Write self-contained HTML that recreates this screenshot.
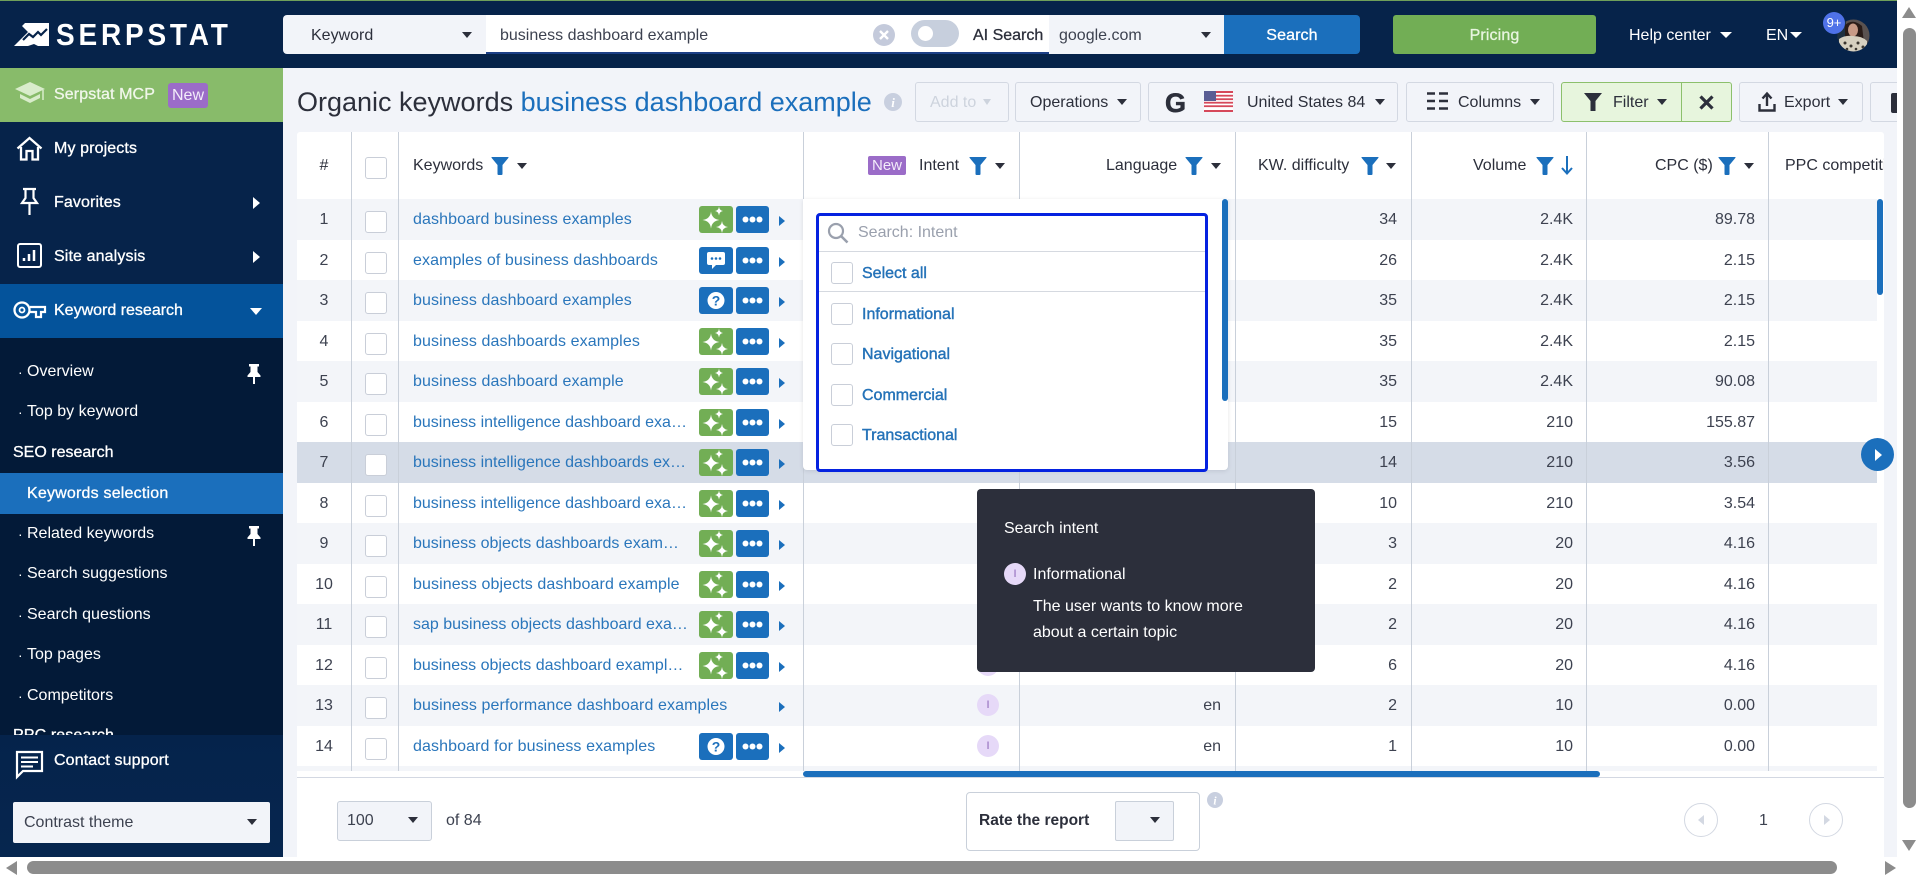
<!DOCTYPE html>
<html lang="en"><head><meta charset="utf-8"><title>Serpstat</title>
<style>
*{box-sizing:border-box}
html,body{margin:0;padding:0;width:1920px;height:878px;overflow:hidden;background:#fff}
body{font-family:"Liberation Sans",Arial,sans-serif;font-size:16px;color:#2c2f3b;position:relative}
.a{position:absolute}
.t{position:absolute;white-space:nowrap;line-height:20px;margin-top:1px}
.m{-webkit-text-stroke:.3px;letter-spacing:.12px}
.w{color:#fff}
svg{display:block;overflow:visible}
.s{position:absolute}
.btn{position:absolute;top:82px;height:40px;background:#f2f4f9;border:1px solid #d3d8e2;border-radius:3px}
.car{position:absolute;width:0;height:0;border-left:5.5px solid transparent;border-right:5.5px solid transparent;border-top:6px solid #2c2f3b}
.carw{border-top-color:#fff}
.cb{position:absolute;width:22px;height:22px;background:#fff;border:1px solid #c9ced8;border-radius:3px}
.side{color:#fff}
.r{position:absolute;left:297px;width:1580px;height:40.5px;line-height:42.5px}
.o{background:#f3f5f9}
.h{background:#d5dce7}
.r>span{position:absolute;top:0;white-space:nowrap}
.n{left:0;width:54px;text-align:center;color:#3d4250}
.k{left:116px;color:#2a76bb;letter-spacing:.1px}
.r .cb{left:68px;top:12px}
.rb{position:absolute;top:7px;height:27px;border-radius:3px;background:#1b6fbc}
.rg{left:402px;width:34px;background:#72ae55}
.rc{left:402px;width:34px}
.rd{left:439px;width:33px}
.rt{position:absolute;left:482px;top:17px;width:0;height:0;border-top:5px solid transparent;border-bottom:5px solid transparent;border-left:6px solid #1b6fbc}
.kw{right:480px;color:#3d4250}.vl{right:304px;color:#3d4250}.cp{right:122px;color:#3d4250}.lg{right:656px;color:#3d4250}
.line{position:absolute;top:132px;height:639px;width:1px;background:#c9d0da}
.th{position:absolute;top:156px;line-height:20px;white-space:nowrap;color:#2c2f3b}
.dd{position:absolute;left:862px;line-height:20px;color:#2472b8;white-space:nowrap;-webkit-text-stroke:.4px;margin-top:1px}
.ic{position:absolute;width:22px;height:22px;border-radius:50%;background:#e6d9f8;color:#8b63b8;font-size:11px;line-height:22px;text-align:center}
</style></head><body>
<svg width="0" height="0" style="position:absolute">
<defs>
<symbol id="fn" viewBox="0 0 18 18"><path d="M1 0H17Q18 0 17.3 1L11.5 8V17Q11.5 18 10.5 18H7.5Q6.5 18 6.5 17V8L.7 1Q0 0 1 0Z" fill="#1b6fbc"/></symbol>
<symbol id="sp" viewBox="0 0 34 27"><g fill="#fff"><path d="M12 5.500Q12.800 13 20.500 14Q12.800 15 12 22.500Q11.200 15 3.500 14Q11.200 13 12 5.500Z"/><path d="M20 .5Q20.400 4.500 24 5Q20.400 5.500 20 9.500Q19.600 5.500 16 5Q19.600 4.500 20 .5Z"/><path d="M23 15Q23.600 20.400 29 21Q23.600 21.600 23 27Q22.400 21.600 17 21Q22.400 20.400 23 15Z"/></g></symbol>
<symbol id="dt" viewBox="0 0 33 27"><g fill="#fff"><circle cx="9.500" cy="13.500" r="3"/><circle cx="16.500" cy="13.500" r="3"/><circle cx="23.500" cy="13.500" r="3"/></g></symbol>
<symbol id="ch" viewBox="0 0 34 27"><path d="M10 5H24Q26 5 26 7V16Q26 18 24 18H17L13 22V18H10Q8 18 8 16V7Q8 5 10 5Z" fill="#fff"/><g fill="#1b6fbc"><circle cx="13" cy="11.500" r="1.300"/><circle cx="17" cy="11.500" r="1.300"/><circle cx="21" cy="11.500" r="1.300"/></g></symbol>
<symbol id="pi" viewBox="0 0 14 20"><path d="M2 0H12V2.500H10.500V8L13.500 11.500V13H8V20H6V13H.5V11.500L3.500 8V2.500H2Z" fill="#fff"/></symbol>
</defs></svg>

<!-- page bg -->
<div class="a" style="left:283px;top:68px;width:1614px;height:789px;background:#f2f4f9"></div>

<!-- header -->
<div class="a" style="left:0;top:0;width:1897px;height:68px;background:#06234a"></div>
<div class="a" style="left:0;top:0;width:1897px;height:1px;background:#6f9f5a"></div>
<svg class="s" style="left:14px;top:23px" width="36" height="24" viewBox="0 0 36 24"><path d="M11 0H35V23H24L20 21L14 23H0L11 12L14 9L8 3Z" fill="#fff"/><path d="M9 17L15 11L19 14L24 9L27 12L33 6" fill="none" stroke="#06234a" stroke-width="2.200"/><path d="M28 0H35V8Z" fill="#fff"/></svg>
<div class="t w" style="left:56px;top:17px;font-size:28px;line-height:34px;font-weight:bold;letter-spacing:3.800px;transform:scaleY(1.1);transform-origin:0 50%">SERPSTAT</div>

<div class="a" style="left:283px;top:15px;width:204px;height:39px;background:#f2f4f9;border-radius:4px 0 0 4px"></div>
<div class="t" style="left:311px;top:25px">Keyword</div>
<div class="car" style="left:462px;top:32px"></div>
<div class="a" style="left:486px;top:15px;width:563px;height:39px;background:#fff;border-bottom:2px solid #1c3f86"></div>
<div class="t" style="left:500px;top:25px;color:#3d4250">business dashboard example</div>
<svg class="s" style="left:873px;top:24px" width="22" height="22" viewBox="0 0 22 22"><circle cx="11" cy="11" r="11" fill="#c4cadb"/><path d="M7 7L15 15M15 7L7 15" stroke="#fff" stroke-width="2.400"/></svg>
<div class="a" style="left:911px;top:20px;width:48px;height:27px;border-radius:14px;background:#c7cfdd"></div>
<div class="a" style="left:918px;top:26px;width:15px;height:15px;border-radius:50%;background:#fff"></div>
<div class="t m" style="left:973px;top:25px;letter-spacing:0">AI Search</div>
<div class="a" style="left:1049px;top:15px;width:176px;height:39px;background:#f2f4f9"></div>
<div class="t" style="left:1059px;top:25px;color:#3d4250">google.com</div>
<div class="car" style="left:1201px;top:32px"></div>
<div class="a" style="left:1224px;top:15px;width:136px;height:39px;background:#1b6fbc;border-radius:0 4px 4px 0"></div>
<div class="t w m" style="left:1224px;width:136px;text-align:center;top:25px">Search</div>
<div class="a" style="left:1393px;top:15px;width:203px;height:39px;background:#72ae55;border-radius:3px"></div>
<div class="t m" style="left:1393px;width:203px;text-align:center;top:25px;color:#e8f5e0">Pricing</div>
<div class="t w" style="left:1629px;top:25px">Help center</div>
<div class="car carw" style="left:1720px;top:32px;border-left-width:6px;border-right-width:6px"></div>
<div class="t w" style="left:1766px;top:25px">EN</div>
<div class="car carw" style="left:1790px;top:32px;border-left-width:6px;border-right-width:6px"></div>
<svg class="s" style="left:1837px;top:19px" width="33" height="33" viewBox="0 0 33 33"><clipPath id="av"><circle cx="16.500" cy="16.500" r="16"/></clipPath><g clip-path="url(#av)"><rect width="33" height="33" fill="#5a5250"/><rect x="0" width="9" height="33" fill="#1e3040"/><path d="M8 6Q16 -1 25 7L27 24H8Z" fill="#2a1c18"/><ellipse cx="16" cy="11" rx="5" ry="6.500" fill="#c79a86"/><path d="M2 33V20Q8 16 16 17Q25 17 30 22V33Z" fill="#d6d0c0"/><g fill="#3a3630"><circle cx="8" cy="24" r="1.500"/><circle cx="14" cy="27" r="1.500"/><circle cx="21" cy="24" r="1.500"/><circle cx="26" cy="28" r="1.500"/><circle cx="10" cy="30" r="1.300"/><circle cx="19" cy="30" r="1.300"/></g></g></svg>
<div class="a" style="left:1823px;top:12px;width:22px;height:22px;border-radius:50%;background:#4f72e8;color:#fff;font-size:13px;line-height:22px;text-align:center">9+</div>

<!-- sidebar -->
<div class="a" style="left:0;top:68px;width:283px;height:789px;background:#06234a"></div>
<div class="a" style="left:0;top:68px;width:283px;height:54px;background:#88bb6a"></div>
<svg class="s" style="left:14px;top:81px" width="32" height="25" viewBox="0 0 32 25"><path d="M16 1L31 8L16 15L1 8Z" fill="#d9eccb"/><path d="M6 13V17L16 22L26 17V13L16 18Z" fill="#d9eccb"/><path d="M29 9V19" stroke="#d9eccb" stroke-width="1.500"/></svg>
<div class="t m" style="left:54px;top:84px;color:#f0f6ea">Serpstat MCP</div>
<div class="a" style="left:168px;top:83px;width:40px;height:25px;background:#9b6cc8;border-radius:3px;color:#f3ecfa;text-align:center;line-height:25px">New</div>

<svg class="s" style="left:16px;top:136px" width="27" height="25" viewBox="0 0 27 25"><path d="M1.500 12.500L13.500 2L25.500 12.500M5 11V23.500H10.500V15H16.500V23.500H22V11" fill="none" stroke="#fff" stroke-width="2.300"/></svg>
<div class="t w m" style="left:54px;top:138px">My projects</div>
<svg class="s" style="left:20px;top:188px" width="19" height="27" viewBox="0 0 19 27"><path d="M3 1H16M5.500 1V10L2 15H17L13.500 10V1M9.500 15V27" fill="none" stroke="#fff" stroke-width="2.200"/></svg>
<div class="t w m" style="left:54px;top:192px">Favorites</div>
<div class="a" style="left:253px;top:197px;border-top:6px solid transparent;border-bottom:6px solid transparent;border-left:7px solid #fff"></div>
<svg class="s" style="left:17px;top:243px" width="25" height="25" viewBox="0 0 25 25"><rect x="1" y="1" width="23" height="23" rx="2" fill="none" stroke="#fff" stroke-width="2"/><path d="M7 15V18M12 11V18M17 7V18" stroke="#fff" stroke-width="2.500"/></svg>
<div class="t w m" style="left:54px;top:246px">Site analysis</div>
<div class="a" style="left:253px;top:251px;border-top:6px solid transparent;border-bottom:6px solid transparent;border-left:7px solid #fff"></div>
<div class="a" style="left:0;top:284px;width:283px;height:54px;background:#04539b"></div>
<svg class="s" style="left:13px;top:300px" width="33" height="20" viewBox="0 0 33 20"><circle cx="9" cy="10" r="7.500" fill="none" stroke="#fff" stroke-width="2.300"/><circle cx="9" cy="10" r="2.500" fill="none" stroke="#fff" stroke-width="1.800"/><path d="M17 7H32V12H28V17H23V12H17" fill="none" stroke="#fff" stroke-width="2.200"/></svg>
<div class="t w m" style="left:54px;top:300px;letter-spacing:0">Keyword research</div>
<div class="a" style="left:250px;top:308px;border-left:6.500px solid transparent;border-right:6.500px solid transparent;border-top:7px solid #fff"></div>

<div class="a" style="left:0;top:338px;width:283px;height:397px;background:#031a38"></div>
<div class="t w" style="left:18px;top:361px;font-size:14px">·</div><div class="t w" style="left:27px;top:361px">Overview</div>
<svg class="s" style="left:247px;top:364px" width="14" height="20"><use href="#pi"/></svg>
<div class="t w" style="left:18px;top:401px;font-size:14px">·</div><div class="t w" style="left:27px;top:401px">Top by keyword</div>
<div class="t w m" style="left:13px;top:442px;letter-spacing:0">SEO research</div>
<div class="a" style="left:0;top:473px;width:283px;height:41px;background:#1b6fbc"></div>
<div class="t w m" style="left:27px;top:483px;letter-spacing:.2px">Keywords selection</div>
<div class="t w" style="left:18px;top:523px;font-size:14px">·</div><div class="t w" style="left:27px;top:523px">Related keywords</div>
<svg class="s" style="left:247px;top:526px" width="14" height="20"><use href="#pi"/></svg>
<div class="t w" style="left:18px;top:563px;font-size:14px">·</div><div class="t w" style="left:27px;top:563px">Search suggestions</div>
<div class="t w" style="left:18px;top:604px;font-size:14px">·</div><div class="t w" style="left:27px;top:604px">Search questions</div>
<div class="t w" style="left:18px;top:644px;font-size:14px">·</div><div class="t w" style="left:27px;top:644px">Top pages</div>
<div class="t w" style="left:18px;top:685px;font-size:14px">·</div><div class="t w" style="left:27px;top:685px">Competitors</div>
<div class="t w m" style="left:13px;top:725px">PPC research</div>

<div class="a" style="left:0;top:735px;width:283px;height:122px;background:linear-gradient(#05234b,#06264f)"></div>
<svg class="s" style="left:15px;top:750px" width="29" height="28" viewBox="0 0 29 28"><path d="M2 2H27V21H8L2 27Z" fill="none" stroke="#fff" stroke-width="2.200"/><path d="M6 7.500H23M6 12H23M6 16.500H18" stroke="#fff" stroke-width="2"/></svg>
<div class="t w m" style="left:54px;top:750px">Contact support</div>
<div class="a" style="left:13px;top:802px;width:257px;height:41px;background:#f2f4f9;border-radius:2px"></div>
<div class="t" style="left:24px;top:812px;color:#3d4250">Contrast theme</div>
<div class="car" style="left:247px;top:819px"></div>

<!-- title -->
<div class="t" style="left:297px;top:85px;font-size:27px;line-height:32px">Organic keywords <span style="color:#1b6fbc">business dashboard example</span></div>
<svg class="s" style="left:884px;top:93px" width="18" height="18" viewBox="0 0 18 18"><circle cx="9" cy="9" r="9" fill="#c8cfdf"/><text x="9" y="14" text-anchor="middle" font-size="13" font-weight="bold" font-style="italic" fill="#fff" font-family="Liberation Serif,serif">i</text></svg>

<div class="btn" style="left:915px;width:94px"></div>
<div class="t" style="left:930px;top:92px;color:#cdd3dd">Add to</div>
<div class="car" style="left:983px;top:99px;border-top-color:#cdd3dd;border-left-width:4.500px;border-right-width:4.500px"></div>
<div class="btn" style="left:1015px;width:126px"></div>
<div class="t" style="left:1030px;top:92px">Operations</div>
<div class="car" style="left:1117px;top:99px"></div>
<div class="btn" style="left:1148px;width:250px"></div>
<div class="t" style="left:1165px;top:86px;font-size:27px;line-height:32px;font-weight:bold;color:#2c2f3b;-webkit-text-stroke:.6px #2c2f3b">G</div>
<svg class="s" style="left:1204px;top:91px" width="29" height="21" viewBox="0 0 29 21"><rect width="29" height="21" fill="#fff"/><g fill="#d6485a"><rect width="29" height="2"/><rect y="3.800" width="29" height="1.800"/><rect y="7.300" width="29" height="1.800"/><rect y="10.800" width="29" height="1.800"/><rect y="14.300" width="29" height="1.800"/><rect y="19" width="29" height="2"/></g><rect width="12" height="10" fill="#5a5d94"/></svg>
<div class="t" style="left:1247px;top:92px">United States 84</div>
<div class="car" style="left:1375px;top:99px"></div>
<div class="btn" style="left:1406px;width:148px"></div>
<svg class="s" style="left:1427px;top:92px" width="21" height="18"><path d="M0 1.500H8M12 1.500H21M0 9H8M12 9H21M0 16.500H8M12 16.500H21" stroke="#2c2f3b" stroke-width="2.600"/></svg>
<div class="t" style="left:1458px;top:92px">Columns</div>
<div class="car" style="left:1530px;top:99px"></div>
<div class="btn" style="left:1561px;width:171px;background:#e7f5dd;border-color:#8cc06c"></div>
<div class="a" style="left:1681px;top:82px;width:1px;height:40px;background:#8cc06c"></div>
<svg class="s" style="left:1584px;top:93px" width="18" height="18"><path d="M0 0H18L11.500 8V18H6.500V8Z" fill="#2c2f3b"/></svg>
<div class="t" style="left:1613px;top:92px">Filter</div>
<div class="car" style="left:1657px;top:99px"></div>
<svg class="s" style="left:1699px;top:95px" width="15" height="15"><path d="M1.500 1.500L13.500 13.500M13.500 1.500L1.500 13.500" stroke="#2c2f3b" stroke-width="3.200"/></svg>
<div class="btn" style="left:1739px;width:124px"></div>
<svg class="s" style="left:1758px;top:92px" width="18" height="20" viewBox="0 0 18 20"><path d="M9 14V2M4.500 6.500L9 1.500L13.500 6.500M1.500 12V18.500H16.500V12" fill="none" stroke="#2c2f3b" stroke-width="2.400"/></svg>
<div class="t" style="left:1784px;top:92px">Export</div>
<div class="car" style="left:1838px;top:99px"></div>
<div class="a" style="left:1870px;top:82px;width:40px;height:40px;background:#f2f4f9;border:1px solid #d3d8e2;border-radius:3px"></div>
<div class="a" style="left:1891px;top:93px;width:8px;height:20px;background:#2c2f3b;border-radius:2px 0 0 2px"></div>

<!-- table -->
<div class="a" style="left:297px;top:132px;width:1587px;height:725px;background:#fff;border-radius:3px 3px 0 0"></div>

<div class="r o" style="top:199px"><span class="n">1</span><i class="cb"></i><span class="k">dashboard business examples</span><div class="rb rg"><svg width="34" height="27"><use href="#sp"/></svg></div><div class="rb rd"><svg width="33" height="27"><use href="#dt"/></svg></div><i class="rt"></i><span class="kw">34</span><span class="vl">2.4K</span><span class="cp">89.78</span></div>
<div class="r" style="top:239.5px"><span class="n">2</span><i class="cb"></i><span class="k">examples of business dashboards</span><div class="rb rc"><svg width="34" height="27"><use href="#ch"/></svg></div><div class="rb rd"><svg width="33" height="27"><use href="#dt"/></svg></div><i class="rt"></i><span class="kw">26</span><span class="vl">2.4K</span><span class="cp">2.15</span></div>
<div class="r o" style="top:280px"><span class="n">3</span><i class="cb"></i><span class="k">business dashboard examples</span><div class="rb rc"><svg width="34" height="27" viewBox="0 0 34 27"><circle cx="17" cy="13.500" r="8.500" fill="#fff"/><text x="17" y="18.500" text-anchor="middle" font-size="14" font-weight="bold" fill="#1b6fbc" font-family="Liberation Sans,sans-serif">?</text></svg></div><div class="rb rd"><svg width="33" height="27"><use href="#dt"/></svg></div><i class="rt"></i><span class="kw">35</span><span class="vl">2.4K</span><span class="cp">2.15</span></div>
<div class="r" style="top:320.5px"><span class="n">4</span><i class="cb"></i><span class="k">business dashboards examples</span><div class="rb rg"><svg width="34" height="27"><use href="#sp"/></svg></div><div class="rb rd"><svg width="33" height="27"><use href="#dt"/></svg></div><i class="rt"></i><span class="kw">35</span><span class="vl">2.4K</span><span class="cp">2.15</span></div>
<div class="r o" style="top:361px"><span class="n">5</span><i class="cb"></i><span class="k">business dashboard example</span><div class="rb rg"><svg width="34" height="27"><use href="#sp"/></svg></div><div class="rb rd"><svg width="33" height="27"><use href="#dt"/></svg></div><i class="rt"></i><span class="kw">35</span><span class="vl">2.4K</span><span class="cp">90.08</span></div>
<div class="r" style="top:401.5px"><span class="n">6</span><i class="cb"></i><span class="k" style="letter-spacing:0">business intelligence dashboard exa…</span><div class="rb rg"><svg width="34" height="27"><use href="#sp"/></svg></div><div class="rb rd"><svg width="33" height="27"><use href="#dt"/></svg></div><i class="rt"></i><span class="kw">15</span><span class="vl">210</span><span class="cp">155.87</span></div>
<div class="r h" style="top:442px"><span class="n">7</span><i class="cb"></i><span class="k" style="letter-spacing:0">business intelligence dashboards ex…</span><div class="rb rg"><svg width="34" height="27"><use href="#sp"/></svg></div><div class="rb rd"><svg width="33" height="27"><use href="#dt"/></svg></div><i class="rt"></i><span class="kw">14</span><span class="vl">210</span><span class="cp">3.56</span></div>
<div class="r" style="top:482.5px"><span class="n">8</span><i class="cb"></i><span class="k" style="letter-spacing:0">business intelligence dashboard exa…</span><div class="rb rg"><svg width="34" height="27"><use href="#sp"/></svg></div><div class="rb rd"><svg width="33" height="27"><use href="#dt"/></svg></div><i class="rt"></i><span class="kw">10</span><span class="vl">210</span><span class="cp">3.54</span></div>
<div class="r o" style="top:523px"><span class="n">9</span><i class="cb"></i><span class="k" style="letter-spacing:0">business objects dashboards exam…</span><div class="rb rg"><svg width="34" height="27"><use href="#sp"/></svg></div><div class="rb rd"><svg width="33" height="27"><use href="#dt"/></svg></div><i class="rt"></i><span class="kw">3</span><span class="vl">20</span><span class="cp">4.16</span></div>
<div class="r" style="top:563.5px"><span class="n">10</span><i class="cb"></i><span class="k">business objects dashboard example</span><div class="rb rg"><svg width="34" height="27"><use href="#sp"/></svg></div><div class="rb rd"><svg width="33" height="27"><use href="#dt"/></svg></div><i class="rt"></i><span class="kw">2</span><span class="vl">20</span><span class="cp">4.16</span></div>
<div class="r o" style="top:604px"><span class="n">11</span><i class="cb"></i><span class="k" style="letter-spacing:0">sap business objects dashboard exa…</span><div class="rb rg"><svg width="34" height="27"><use href="#sp"/></svg></div><div class="rb rd"><svg width="33" height="27"><use href="#dt"/></svg></div><i class="rt"></i><span class="kw">2</span><span class="vl">20</span><span class="cp">4.16</span></div>
<div class="r" style="top:644.5px"><span class="n">12</span><i class="cb"></i><span class="k" style="letter-spacing:0">business objects dashboard exampl…</span><div class="rb rg"><svg width="34" height="27"><use href="#sp"/></svg></div><div class="rb rd"><svg width="33" height="27"><use href="#dt"/></svg></div><i class="rt"></i><div class="ic" style="left:680px;top:9px">I</div><span class="kw">6</span><span class="vl">20</span><span class="cp">4.16</span></div>
<div class="r o" style="top:685px"><span class="n">13</span><i class="cb"></i><span class="k">business performance dashboard examples</span><i class="rt"></i><div class="ic" style="left:680px;top:9px">I</div><span class="lg">en</span><span class="kw">2</span><span class="vl">10</span><span class="cp">0.00</span></div>
<div class="r" style="top:725.5px"><span class="n">14</span><i class="cb"></i><span class="k">dashboard for business examples</span><div class="rb rc"><svg width="34" height="27" viewBox="0 0 34 27"><circle cx="17" cy="13.500" r="8.500" fill="#fff"/><text x="17" y="18.500" text-anchor="middle" font-size="14" font-weight="bold" fill="#1b6fbc" font-family="Liberation Sans,sans-serif">?</text></svg></div><div class="rb rd"><svg width="33" height="27"><use href="#dt"/></svg></div><i class="rt"></i><div class="ic" style="left:680px;top:9px">I</div><span class="lg">en</span><span class="kw">1</span><span class="vl">10</span><span class="cp">0.00</span></div>
<div class="a o" style="left:297px;top:766px;width:1580px;height:5px"></div>

<div class="line" style="left:351px"></div><div class="line" style="left:398px"></div><div class="line" style="left:803px"></div><div class="line" style="left:1019px"></div><div class="line" style="left:1235px"></div><div class="line" style="left:1411px"></div><div class="line" style="left:1586px"></div><div class="line" style="left:1768px"></div>

<!-- table head -->
<div class="th" style="left:297px;width:54px;text-align:center">#</div>
<div class="cb" style="left:365px;top:157px"></div>
<div class="th" style="left:413px">Keywords</div>
<svg class="s" style="left:491px;top:157px" width="18" height="18"><use href="#fn"/></svg><div class="car" style="left:517px;top:163px"></div>
<div class="a" style="left:868px;top:156px;width:38px;height:19px;background:#9b6cc8;border-radius:2px;color:#f3ecfa;font-size:15px;line-height:19px;text-align:center">New</div>
<div class="th" style="left:919px">Intent</div>
<svg class="s" style="left:969px;top:157px" width="18" height="18"><use href="#fn"/></svg><div class="car" style="left:995px;top:163px"></div>
<div class="th" style="left:1106px">Language</div>
<svg class="s" style="left:1185px;top:157px" width="18" height="18"><use href="#fn"/></svg><div class="car" style="left:1211px;top:163px"></div>
<div class="th" style="left:1258px">KW. difficulty</div>
<svg class="s" style="left:1361px;top:157px" width="18" height="18"><use href="#fn"/></svg><div class="car" style="left:1386px;top:163px"></div>
<div class="th" style="left:1473px">Volume</div>
<svg class="s" style="left:1536px;top:157px" width="18" height="18"><use href="#fn"/></svg>
<svg class="s" style="left:1561px;top:156px" width="12" height="19" viewBox="0 0 12 19"><path d="M6 0V17M1 12L6 17.500L11 12" fill="none" stroke="#1b6fbc" stroke-width="2"/></svg>
<div class="th" style="left:1655px">CPC ($)</div>
<svg class="s" style="left:1718px;top:157px" width="18" height="18"><use href="#fn"/></svg><div class="car" style="left:1744px;top:163px"></div>
<div class="a" style="left:1785px;top:156px;width:99px;height:20px;overflow:hidden;white-space:nowrap;line-height:20px">PPC competition</div>

<!-- table scrollbars -->
<div class="a" style="left:1877px;top:199px;width:6px;height:96px;background:#1b6fbc;border-radius:3px"></div>
<div class="a" style="left:803px;top:771px;width:797px;height:6px;background:#1b6fbc;border-radius:3px"></div>
<div class="a" style="left:297px;top:777px;width:1587px;height:1px;background:#d3d8e2"></div>
<div class="a" style="left:1861px;top:438px;width:33px;height:33px;border-radius:50%;background:#1b6fbc"></div>
<div class="a" style="left:1875px;top:449px;border-top:6px solid transparent;border-bottom:6px solid transparent;border-left:7px solid #fff"></div>

<!-- dropdown -->
<div class="a" style="left:803px;top:199px;width:425px;height:271px;background:#fff;border-radius:0 0 4px 4px;box-shadow:0 1px 4px rgba(60,70,90,.15)"></div>
<div class="a" style="left:816px;top:213px;width:392px;height:259px;border:3px solid #0522e0;border-radius:4px"></div>
<div class="a" style="left:819px;top:251px;width:386px;height:1px;background:#d5d9e0"></div>
<div class="a" style="left:819px;top:291px;width:386px;height:1px;background:#d5d9e0"></div>
<svg class="s" style="left:827px;top:222px" width="22" height="22" viewBox="0 0 22 22"><circle cx="9" cy="9" r="7" fill="none" stroke="#9aa0ad" stroke-width="2.200"/><path d="M14 14L20.500 20.500" stroke="#9aa0ad" stroke-width="2.600"/></svg>
<div class="t" style="left:858px;top:222px;color:#9aa0ad">Search: Intent</div>
<div class="cb" style="left:831px;top:262px"></div><div class="dd" style="top:263px">Select all</div>
<div class="cb" style="left:831px;top:303px"></div><div class="dd" style="top:304px">Informational</div>
<div class="cb" style="left:831px;top:343px"></div><div class="dd" style="top:344px">Navigational</div>
<div class="cb" style="left:831px;top:384px"></div><div class="dd" style="top:385px">Commercial</div>
<div class="cb" style="left:831px;top:424px"></div><div class="dd" style="top:425px">Transactional</div>
<div class="a" style="left:1222px;top:199px;width:6px;height:202px;background:#1b6fbc;border-radius:3px"></div>

<!-- tooltip -->
<div class="a" style="left:977px;top:489px;width:338px;height:183px;background:#2c2f3b;border-radius:4px"></div>
<div class="t" style="left:1004px;top:518px;color:#fff">Search intent</div>
<div class="ic" style="left:1004px;top:563px">I</div>
<div class="t" style="left:1033px;top:564px;color:#fff">Informational</div>
<div class="t" style="left:1033px;top:596px;color:#fff">The user wants to know more</div>
<div class="t" style="left:1033px;top:622px;color:#fff">about a certain topic</div>

<!-- footer -->
<div class="a" style="left:337px;top:801px;width:95px;height:40px;background:#f2f4f9;border:1px solid #c9d0da;border-radius:3px"></div>
<div class="t" style="left:347px;top:810px;color:#3d4250">100</div>
<div class="car" style="left:408px;top:817px"></div>
<div class="t" style="left:446px;top:810px;color:#3d4250">of 84</div>
<div class="a" style="left:966px;top:792px;width:234px;height:59px;border:1px solid #c9d0da;border-radius:4px;background:#fff"></div>
<div class="t" style="left:979px;top:810px;font-weight:bold;font-size:15.500px;line-height:20px">Rate the report</div>
<div class="a" style="left:1115px;top:801px;width:59px;height:40px;background:#f2f4f9;border:1px solid #c9d0da;border-radius:2px"></div>
<div class="car" style="left:1150px;top:817px"></div>
<svg class="s" style="left:1207px;top:792px" width="16" height="16" viewBox="0 0 18 18"><circle cx="9" cy="9" r="9" fill="#c8cfdf"/><text x="9" y="14" text-anchor="middle" font-size="13" font-weight="bold" font-style="italic" fill="#fff" font-family="Liberation Serif,serif">i</text></svg>
<div class="a" style="left:1684px;top:803px;width:34px;height:34px;border-radius:50%;border:1px solid #d3d8e2;background:#fff"></div>
<div class="a" style="left:1698px;top:815px;border-top:5px solid transparent;border-bottom:5px solid transparent;border-right:6px solid #d3d8e2"></div>
<div class="t" style="left:1759px;top:810px;color:#3d4250">1</div>
<div class="a" style="left:1809px;top:803px;width:34px;height:34px;border-radius:50%;border:1px solid #d3d8e2;background:#fff"></div>
<div class="a" style="left:1824px;top:815px;border-top:5px solid transparent;border-bottom:5px solid transparent;border-left:6px solid #d3d8e2"></div>

<!-- browser scrollbars -->
<div class="a" style="left:1897px;top:0;width:23px;height:878px;background:#fff"></div>
<div class="a" style="left:0;top:857px;width:1920px;height:21px;background:#fff"></div>
<div class="a" style="left:1903px;top:28px;width:13px;height:780px;background:#8c8c8c;border-radius:7px"></div>
<div class="a" style="left:1902px;top:7px;border-left:7px solid transparent;border-right:7px solid transparent;border-bottom:11px solid #8c8c8c"></div>
<div class="a" style="left:1902px;top:840px;border-left:7px solid transparent;border-right:7px solid transparent;border-top:11px solid #8c8c8c"></div>
<div class="a" style="left:27px;top:861px;width:1810px;height:13px;background:#8c8c8c;border-radius:7px"></div>
<div class="a" style="left:6px;top:861px;border-top:7px solid transparent;border-bottom:7px solid transparent;border-right:11px solid #8c8c8c"></div>
<div class="a" style="left:1885px;top:861px;border-top:7px solid transparent;border-bottom:7px solid transparent;border-left:11px solid #8c8c8c"></div>
</body></html>
